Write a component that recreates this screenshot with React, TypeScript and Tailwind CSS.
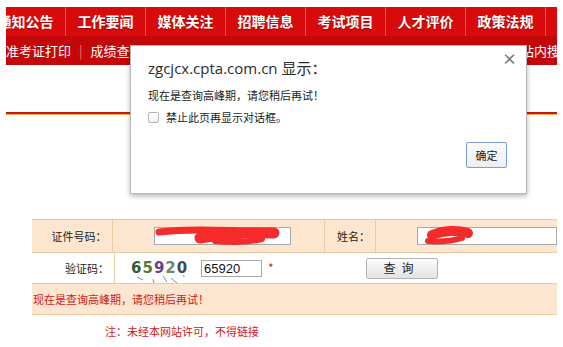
const navItems = ["通知公告", "工作要闻", "媒体关注", "招聘信息", "考试项目", "人才评价", "政策法规", "站点"];

const captcha = [
  { ch: "6", color: "text-[#2f5b3a]" },
  { ch: "5", color: "text-[#557a34]" },
  { ch: "9", color: "text-[#6a3f86]" },
  { ch: "2", color: "text-[#6f8a6a]" },
  { ch: "0", color: "text-[#3f4b57]" },
];

function AlertDialog() {
  return (
    <div className="absolute left-[130px] top-[45px] h-[149px] w-[397px] border border-[#b9b9b9] bg-white shadow-[0_2px_5px_rgba(0,0,0,0.3)]">
      <span className="absolute right-[9px] top-[4px] text-[15px] font-bold leading-[18px] text-[#7a7a7a]">×</span>

      <div className="pl-[17px] pt-[12px]">
        {/* 标题 */}
        <div className="text-[15px] leading-[20px] text-[#2b2b2b] font-['Open_Sans','Noto_Sans_CJK_SC',sans-serif]">
          zgcjcx.cpta.com.cn 显示：
        </div>
        <div className="mt-[9px] text-[11px] leading-[16px] text-[#222]">现在是查询高峰期，请您稍后再试！</div>
        <label className="mt-[7px] flex items-center gap-[7px] text-[11px] leading-[14px] text-[#222]">
          <span className="h-[11px] w-[11px] rounded-[2px] border border-[#b3b3b3] bg-gradient-to-b from-white to-[#f1f1f1]" />
          禁止此页再显示对话框。
        </label>
      </div>

      <div className="mt-[18px] flex justify-end pr-[19px]">
        <button className="h-[26px] w-[41px] rounded-[2px] border border-[#7e9fd6] bg-gradient-to-b from-[#fbfbfb] to-[#eceef2] text-[11px] text-[#222]">
          确定
        </button>
      </div>
    </div>
  );
}

function Scribbles() {
  return (
    <svg className="pointer-events-none absolute left-0 top-0" width="563" height="347" viewBox="0 0 563 347">
      <g stroke="#f52b2b" strokeLinecap="round" fill="none">
        <path d="M159 232 C185 229, 215 230, 250 231" strokeWidth="7" />
        <path d="M200 238 C225 234, 255 232, 274 233" strokeWidth="11" />
        <path d="M215 241 C235 243, 250 242, 262 239" strokeWidth="6" />
        <path d="M432 235 C444 230, 458 230, 468 233" strokeWidth="10" />
        <path d="M428 241 C440 242, 452 241, 462 238" strokeWidth="6" />
      </g>
    </svg>
  );
}

export default function App() {
  return (
    <div className="relative h-[347px] w-[563px] overflow-hidden bg-white font-['Noto_Sans_CJK_SC',sans-serif]">
      {/* 顶部导航 */}
      <div className="ml-[6px] w-[551px] overflow-hidden pt-[7px]">
        <nav className="-ml-[20px] flex h-[29px] bg-[#d80a0b]">
          {navItems.map((item, i) => (
            <div
              key={item}
              className="w-[80px] shrink-0 border-r border-[#ef5151] text-center text-[14px] font-bold leading-[29px] text-white [text-shadow:0_1px_1px_rgba(90,0,0,0.45)]"
            >
              {i < 7 ? item : ""}
            </div>
          ))}
        </nav>
        <div className="flex h-[29px] items-center overflow-hidden bg-[#c4080a] text-[13px] leading-[29px] text-white">
          <span>准考证打印</span>
          <span className="mx-[8px] text-[#e87070]">|</span>
          <span>成绩查询</span>
          <span className="-mr-[16px] ml-auto">站内搜索</span>
        </div>
        <div className="mt-[47px] h-[2px] bg-[#c9161d]" />
        <div className="h-[1px] bg-[#f3ae54]" />
      </div>

      {/* 查询表单 */}
      <div className="ml-[32px] mt-[104px] w-[525px] border-t border-[#eccba7] text-[11px] text-[#222]">
        <div className="flex h-[33px] border-b border-[#eccba7] bg-[#fce6d0]">
          <div className="flex w-[83px] items-center justify-end border-r border-[#eccba7] pr-[5px]">证件号码：</div>
          <div className="flex w-[220px] items-center border-r border-[#eccba7]">
            <div className="ml-[41px] h-[18px] w-[137px] border border-[#a9a9a9] bg-white" />
          </div>
          <div className="flex w-[52px] items-center justify-end border-r border-[#eccba7] pr-[5px]">姓名：</div>
          <div className="flex flex-1 items-center">
            <div className="ml-[41px] h-[18px] w-[140px] border border-[#a9a9a9] bg-white" />
          </div>
        </div>

        <div className="flex h-[31px] border-b border-[#eccba7] bg-white">
          <div className="flex w-[83px] items-center justify-end border-r border-[#eccba7] pr-[5px]">验证码：</div>
          <div className="flex flex-1 items-center">
            <div className="relative ml-[16px] flex w-[54px] gap-[1px] text-[15px] font-bold leading-[20px] font-['DejaVu_Sans',sans-serif]">
              {captcha.map((c) => (
                <span key={c.ch} className={c.color}>
                  {c.ch}
                </span>
              ))}
              <svg className="absolute left-0 top-[17px]" width="60" height="10" viewBox="0 0 60 10">
                <g stroke="#8a8a95" strokeWidth="1" fill="none">
                  <path d="M6 2 L12 5" />
                  <path d="M22 4 L23 8" />
                  <path d="M32 1 L36 7" />
                  <path d="M40 3 L46 8" />
                  <path d="M52 -4 L53 2" />
                </g>
              </svg>
            </div>
            <input
              readOnly
              value="65920"
              className="ml-[16px] h-[17px] w-[61px] border border-[#a9a9a9] bg-white px-[2px] text-[13px] leading-[15px] text-[#111] font-['Liberation_Sans',sans-serif] outline-none"
            />
            <span className="ml-[6px] text-[12px] text-[#e02020]">*</span>
            <button className="ml-[92px] h-[21px] w-[72px] rounded-[2px] border border-[#b4b4b4] bg-gradient-to-b from-[#fdfdfd] to-[#e3e3e3] text-[12px] tracking-[6px] text-[#222]">
              查询
            </button>
          </div>
        </div>

        <div className="flex h-[31px] items-center border-b border-[#eccba7] bg-[#fce6d0] pl-[1px] text-[#d01818]">
          现在是查询高峰期，请您稍后再试！
        </div>
      </div>

      <div className="ml-[105px] mt-[9px] text-[11px] leading-[14px] text-[#d01818]">注：未经本网站许可，不得链接</div>

      <Scribbles />
      <AlertDialog />
    </div>
  );
}
